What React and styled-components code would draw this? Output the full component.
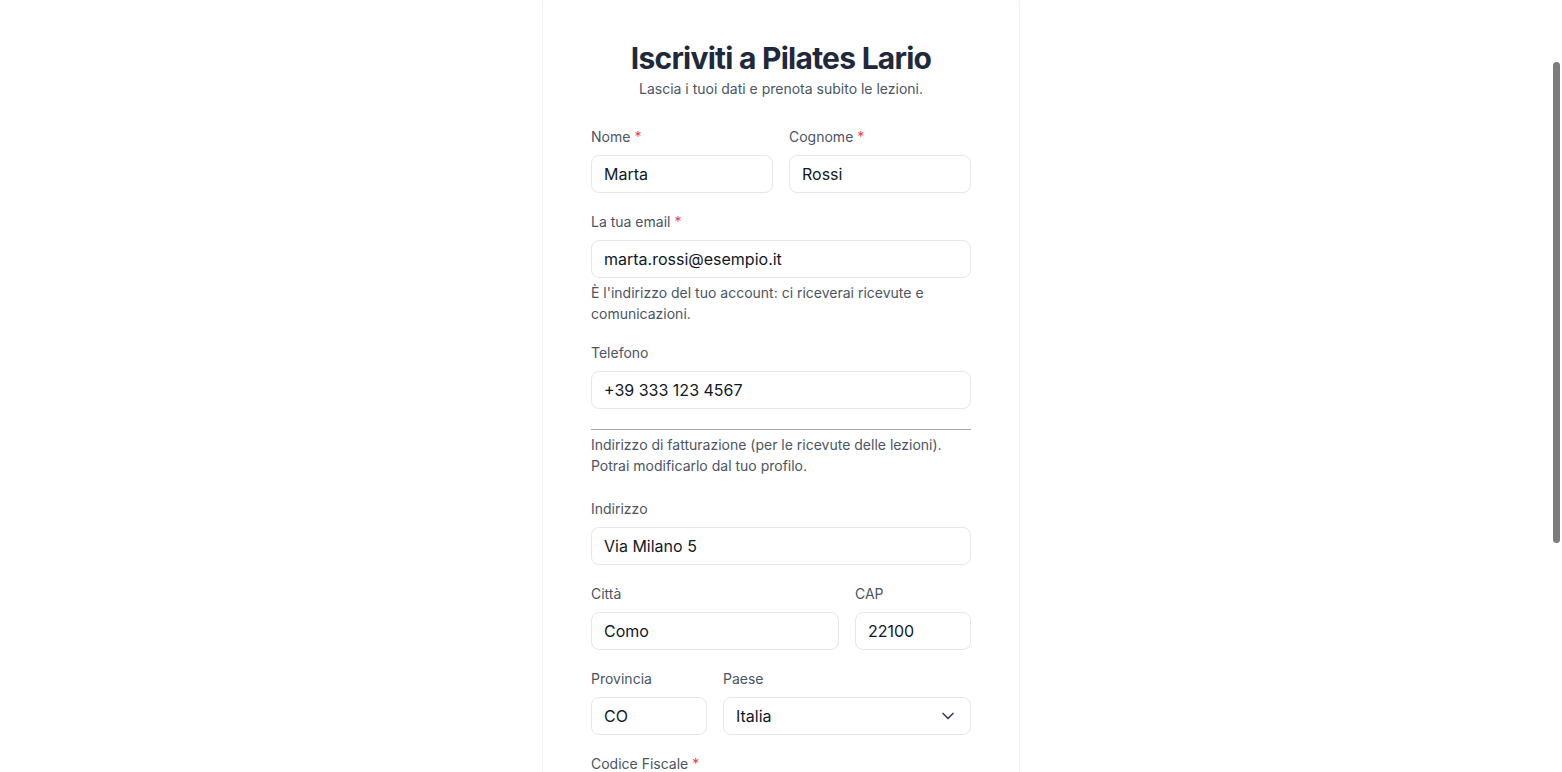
import React, { useEffect, useLayoutEffect } from "react";
import styled, { createGlobalStyle } from "styled-components";

const GlobalStyle = createGlobalStyle`
  html, body { margin: 0; padding: 0; background: #ffffff; }
  html { scroll-behavior: auto; }
  body { font-family: Inter, "Noto Sans", "Liberation Sans", sans-serif; color: #111827; }
  * { box-sizing: border-box; }
`;

const ScrollThumb = styled.div`
  position: fixed;
  top: 62px;
  right: 2px;
  width: 7px;
  height: 481px;
  border-radius: 4px;
  background: #7c7c7c;
  z-index: 10;
`;

const Page = styled.div`
  display: flex;
  justify-content: center;
  padding: 91px 16px 70px;
`;

const Card = styled.div`
  width: 478px;
  background: #ffffff;
  border: 1px solid #f1f2f4;
  border-radius: 12px;
  box-shadow: 0 1px 2px rgba(0, 0, 0, 0.03);
  padding: 48px;
`;

const Header = styled.header`
  text-align: center;
  margin-bottom: 26.5px;
`;

const Title = styled.h1`
  margin: 0;
  font-size: 30px;
  line-height: 36px;
  font-weight: 700;
  color: #1e293b;
  letter-spacing: -0.75px;
`;

const Subtitle = styled.p`
  margin: 3px 0 0;
  font-size: 14px;
  line-height: 20px;
  color: #4b5563;
`;

const Form = styled.form`
  display: flex;
  flex-direction: column;
  gap: 18px;
`;

const Row = styled.div`
  display: grid;
  grid-template-columns: ${(p) => p.$cols || "1fr 1fr"};
  gap: 16px;
`;

const Field = styled.div`
  display: flex;
  flex-direction: column;
  grid-column: ${(p) => (p.$span ? `span ${p.$span}` : "auto")};
  min-width: 0;
`;

const Label = styled.label`
  font-size: 14px;
  line-height: 21px;
  color: #4b5563;
  margin-bottom: 8px;
`;

const Req = styled.span`
  color: #ef4444;
  margin-left: 4px;
`;

const Input = styled.input`
  height: 38px;
  width: 100%;
  border: 1px solid #e5e7eb;
  border-radius: 8px;
  padding: 0 12px;
  font-family: inherit;
  font-size: 16px;
  color: #111827;
  background: #ffffff;
  outline: none;
`;

const SelectBox = styled.div`
  display: flex;
  align-items: center;
  justify-content: space-between;
  height: 38px;
  border: 1px solid #e5e7eb;
  border-radius: 8px;
  padding: 0 12px;
  font-size: 16px;
  color: #111827;
  background: #ffffff;
`;

const Chevron = styled.svg`
  width: 20px;
  height: 20px;
  color: #374151;
  flex-shrink: 0;
`;

const Help = styled.p`
  margin: 4px 0 0;
  font-size: 14px;
  line-height: 21px;
  color: #4b5563;
`;

const Section = styled.div`
  border-top: 1px solid #a3a8b0;
  margin-top: 2px;
  padding-top: 4px;
  margin-bottom: 4px;
`;

const SectionText = styled.p`
  margin: 0;
  font-size: 14px;
  line-height: 21px;
  color: #4b5563;
`;

const CheckRow = styled.label`
  display: flex;
  align-items: center;
  gap: 8px;
  font-size: 14px;
  line-height: 21px;
  color: #4b5563;
`;

const Box = styled.span`
  width: 16px;
  height: 16px;
  border: 1px solid #d1d5db;
  border-radius: 4px;
`;

const Button = styled.button`
  height: 42px;
  border: none;
  border-radius: 8px;
  background: #1e293b;
  color: #ffffff;
  font-family: inherit;
  font-size: 16px;
  font-weight: 600;
  margin-top: 6px;
`;

function TextField({ label, required, value, help, span }) {
  return (
    <Field $span={span}>
      <Label>
        {label}
        {required && <Req>*</Req>}
      </Label>
      <Input defaultValue={value} />
      {help && <Help>{help}</Help>}
    </Field>
  );
}

export default function App() {
  useLayoutEffect(() => {
    window.scrollTo(0, 100);
  }, []);
  useEffect(() => {
    window.scrollTo(0, 100);
    const t = setTimeout(() => window.scrollTo(0, 100), 50);
    return () => clearTimeout(t);
  }, []);

  return (
    <>
      <GlobalStyle />
      <ScrollThumb aria-hidden="true" />
      <Page>
        <Card>
          <Header>
            <Title>Iscriviti a Pilates Lario</Title>
            <Subtitle>Lascia i tuoi dati e prenota subito le lezioni.</Subtitle>
          </Header>
          <Form onSubmit={(e) => e.preventDefault()}>
            <Row>
              <TextField label="Nome" required value="Marta" />
              <TextField label="Cognome" required value="Rossi" />
            </Row>
            <TextField
              label="La tua email"
              required
              value="marta.rossi@esempio.it"
              help="È l'indirizzo del tuo account: ci riceverai ricevute e comunicazioni."
            />
            <TextField label="Telefono" value="+39 333 123 4567" />
            <Section>
              <SectionText>
                Indirizzo di fatturazione (per le ricevute delle lezioni). Potrai modificarlo dal tuo profilo.
              </SectionText>
            </Section>
            <TextField label="Indirizzo" value="Via Milano 5" />
            <Row $cols="repeat(3, 1fr)">
              <TextField label="Città" value="Como" span={2} />
              <TextField label="CAP" value="22100" />
            </Row>
            <Row $cols="repeat(3, 1fr)">
              <TextField label="Provincia" value="CO" />
              <Field $span={2}>
                <Label>Paese</Label>
                <SelectBox>
                  <span>Italia</span>
                  <Chevron viewBox="0 0 24 24" fill="none" stroke="currentColor" strokeWidth="2" strokeLinecap="round" strokeLinejoin="round">
                    <path d="m6 9 6 6 6-6" />
                  </Chevron>
                </SelectBox>
              </Field>
            </Row>
            <TextField label="Codice Fiscale" required value="" />
            <TextField label="Password" required value="" />
            <CheckRow>
              <Box />
              Accetto i termini e la privacy
            </CheckRow>
            <Button type="submit">Crea account</Button>
          </Form>
        </Card>
      </Page>
    </>
  );
}
